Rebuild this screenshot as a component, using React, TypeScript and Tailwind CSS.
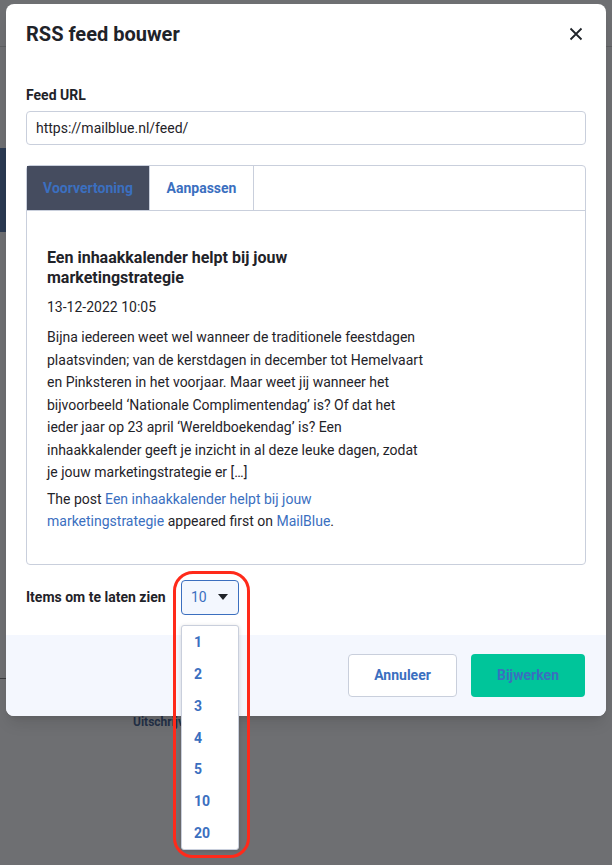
import React from 'react';

const font = { fontFamily: 'Roboto, "Liberation Sans", sans-serif' };

const options = ['1', '2', '3', '4', '5', '10', '20'];

function Backdrop() {
  // faint remnants of the page behind the overlay
  return (
    <>
      <div className="absolute left-0 right-0 top-[46px] h-px bg-[#5e5f62]" />
      <div className="absolute left-0 top-[148px] h-[84px] w-[8px] bg-[#2b3a52]" />
      <div className="absolute left-0 top-[678px] h-px w-[8px] bg-[#3a3b3e]" />
      <div className="absolute left-[133px] top-[713px] text-[12px] font-bold text-[#233047]">Uitschrijven</div>
    </>
  );
}

export default function App() {
  return (
    <div className="relative h-[865px] w-[612px] overflow-hidden bg-[#6e6f72] pl-[6px] pt-[4px]" style={font}>
      <Backdrop />
      <div className="relative w-[600px] overflow-hidden rounded-[8px] bg-white shadow-lg">
        <div className="flex items-center justify-between px-[20px] pt-[16px]">
          <h1 className="text-[20px] font-bold leading-[28px] text-[#1f2329]">RSS feed bouwer</h1>
          <svg width="14" height="14" viewBox="0 0 14 14" className="mr-[3px]" fill="none" stroke="#1f2329" strokeWidth="1.8">
            <path d="M1.5 1.5l11 11M12.5 1.5l-11 11" />
          </svg>
        </div>

        <div className="px-[20px]">
          <div className="mt-[37px] text-[14px] font-bold leading-[20px] text-[#1f2329]">Feed URL</div>
          <div className="mt-[6px] flex h-[34px] items-center rounded-[4px] border border-[#c9cfdc] px-[9px] text-[14px] text-[#1f2329]">
            https://mailblue.nl/feed/
          </div>

          <div className="mt-[20px] rounded-[4px] border border-[#c9cfdc]">
            <div className="flex h-[45px] border-b border-[#c9cfdc]">
              <div className="flex w-[122px] items-center justify-center bg-[#454c5f] text-[14px] font-bold text-[#3b6fbf]">
                Voorvertoning
              </div>
              <div className="flex w-[105px] items-center justify-center border-l border-r border-[#c9cfdc] text-[14px] font-bold text-[#3b6fbf]">
                Aanpassen
              </div>
            </div>
            <div className="px-[20px] pb-[32px] pt-[37px]">
              <div className="text-[16px] font-bold leading-[20px] text-[#1f2329]">
                Een inhaakkalender helpt bij jouw
                <br />
                marketingstrategie
              </div>
              <div className="mt-[9px] text-[14px] leading-[20px] text-[#1f2329]">13-12-2022 10:05</div>
              <p className="mt-[9px] text-[14px] leading-[22.5px] text-[#1f2329]">
                Bijna iedereen weet wel wanneer de traditionele feestdagen
                <br />
                plaatsvinden; van de kerstdagen in december tot Hemelvaart
                <br />
                en Pinksteren in het voorjaar. Maar weet jij wanneer het
                <br />
                bijvoorbeeld ‘Nationale Complimentendag’ is? Of dat het
                <br />
                ieder jaar op 23 april ‘Wereldboekendag’ is? Een
                <br />
                inhaakkalender geeft je inzicht in al deze leuke dagen, zodat
                <br />
                je jouw marketingstrategie er […]
              </p>
              <p className="mt-[4px] text-[14px] leading-[22px] text-[#1f2329]">
                The post <span className="text-[#3b6fbf]">Een inhaakkalender helpt bij jouw</span>
                <br />
                <span className="text-[#3b6fbf]">marketingstrategie</span> appeared first on{' '}
                <span className="text-[#3b6fbf]">MailBlue</span>.
              </p>
            </div>
          </div>

          <div className="mt-[15px] flex items-center">
            <span className="w-[155px] text-[14px] font-bold text-[#1f2329]">Items om te laten zien</span>
            <div className="flex h-[35px] w-[58px] items-center justify-between rounded-[4px] border border-[#3b6fbf] bg-[#f3f7fe] pl-[9px] pr-[10px] text-[14px] text-[#3b6fbf]">
              10
              <svg width="10" height="6" viewBox="0 0 10 6">
                <path d="M0 0h10L5 6z" fill="#1f2329" />
              </svg>
            </div>
          </div>
        </div>

        <div className="mt-[20px] flex h-[81px] items-start justify-end gap-[14px] bg-[#f4f7fe] pr-[21px] pt-[19px]">
          <button className="h-[43px] w-[109px] rounded-[4px] border border-[#c9cfdc] bg-white text-[14px] font-bold text-[#3b6fbf]">
            Annuleer
          </button>
          <button className="h-[43px] w-[114px] rounded-[4px] bg-[#00c59a] text-[14px] font-bold text-[#3b6fbf]">
            Bijwerken
          </button>
        </div>
      </div>

      {/* open select list */}
      <div className="absolute left-[181px] top-[625px] flex h-[225px] w-[58px] flex-col rounded-[3px] border border-[#c9cfdc] bg-white pt-[1px] shadow-[0_1px_4px_rgba(0,0,0,0.15)]">
        {options.map((o) => (
          <div key={o} className="flex h-[32.2px] items-center pl-[12px] text-[14px] font-bold text-[#3b6fbf]">
            {o}
          </div>
        ))}
      </div>

      {/* red annotation */}
      <div className="pointer-events-none absolute left-[173px] top-[571px] h-[287px] w-[77px] rounded-[20px] border-[3px] border-[#ff2a1a]" />
    </div>
  );
}
